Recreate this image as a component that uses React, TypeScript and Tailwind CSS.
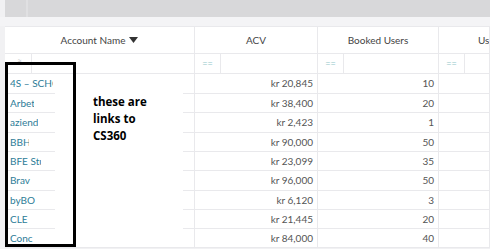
const rows = [
  { name: '4S – SCHOOL', clip: 'w-[43px]', acv: 'kr 20,845', users: '10', h: 'h-[20px]' },
  { name: 'Arbetsförmedlingen', clip: 'w-[24px]', acv: 'kr 38,400', users: '20', h: 'h-[19px]' },
  { name: 'azienda', clip: 'w-[28px]', acv: 'kr 2,423', users: '1', h: 'h-[20px]' },
  { name: 'BBH', clip: 'w-[19px]', acv: 'kr 90,000', users: '50', h: 'h-[19px]' },
  { name: 'BFE Studio', clip: 'w-[31px]', acv: 'kr 23,099', users: '35', h: 'h-[19px]' },
  { name: 'Brav', clip: 'w-[40px]', acv: 'kr 96,000', users: '50', h: 'h-[20px]' },
  { name: 'byBO', clip: 'w-[40px]', acv: 'kr 6,120', users: '3', h: 'h-[19px]' },
  { name: 'CLE', clip: 'w-[40px]', acv: 'kr 21,445', users: '20', h: 'h-[19px]' },
  { name: 'Conc', clip: 'w-[40px]', acv: 'kr 84,000', users: '40', h: 'h-[19px]' },
]

const cols = 'grid grid-cols-[190px_123px_121px_1fr]'
const cell = 'border-r border-b border-[#e9e9ec]'

function FilterCell() {
  return (
    <div className={`${cell} flex`}>
      <div className="w-[26px] border-r border-[#e9e9ec] flex items-center justify-center text-[9px] text-[#8fc6c9]">==</div>
    </div>
  )
}

export default function App() {
  return (
    <div className="relative w-[490px] h-[249px] overflow-hidden bg-[#f1f1f3] font-['Lato',sans-serif]">
      {/* top toolbar */}
      <div className="flex h-[17px]">
        <div className="w-[5px]" />
        <div className="flex-1 flex bg-[#d8d8da]">
          <div className="w-[23px] border-r-2 border-[#e0e0e2]" />
        </div>
      </div>
      <div className="h-[9px] bg-[#f4f4f6]" />

      {/* table */}
      <div className="ml-[5px] bg-white">
        <div className={`${cols} h-[28px] text-[10px] text-[#444]`}>
          <div className={`${cell} border-t flex items-center justify-center gap-1`}>
            Account Name
            <svg width="9" height="6" viewBox="0 0 9 6"><path d="M0 0h9L4.5 6z" fill="#333" /></svg>
          </div>
          <div className={`${cell} border-t flex items-center justify-center`}>ACV</div>
          <div className={`${cell} border-t flex items-center justify-center`}>Booked Users</div>
          <div className={`${cell} border-t flex items-center pl-[39px] whitespace-nowrap overflow-hidden`}>Users</div>
        </div>

        <div className={`${cols} h-[20px]`}>
          <div className={`${cell} flex`}>
            <div className="w-[27px] border-r border-[#e9e9ec] flex items-start justify-end pr-[9px] text-[8px] text-[#bbb]">≈</div>
          </div>
          <FilterCell />
          <FilterCell />
          <FilterCell />
        </div>

        {rows.map((r) => (
          <div key={r.name} className={`${cols} ${r.h} text-[10px]`}>
            <div className={`${cell} flex items-center pl-[5px]`}>
              <span className={`${r.clip} overflow-hidden whitespace-nowrap text-[#2d7c97]`}>{r.name}</span>
            </div>
            <div className={`${cell} flex items-center justify-end pr-[4px] text-[#555]`}>{r.acv}</div>
            <div className={`${cell} flex items-center justify-end pr-[4px] text-[#555]`}>{r.users}</div>
            <div className={cell} />
          </div>
        ))}
      </div>

      {/* annotation */}
      <div className="absolute left-[55px] top-[74px] w-[128px] h-[173px] bg-white pl-[38px] pt-[19px] font-['Open_Sans',sans-serif] text-[11.5px] font-bold leading-[17px] text-black">
        <div>these are</div>
        <div>links to</div>
        <div>CS360</div>
      </div>
      <div className="absolute left-[5px] top-[62px] w-[71px] h-[185px] border-[3px] border-black" />
    </div>
  )
}
